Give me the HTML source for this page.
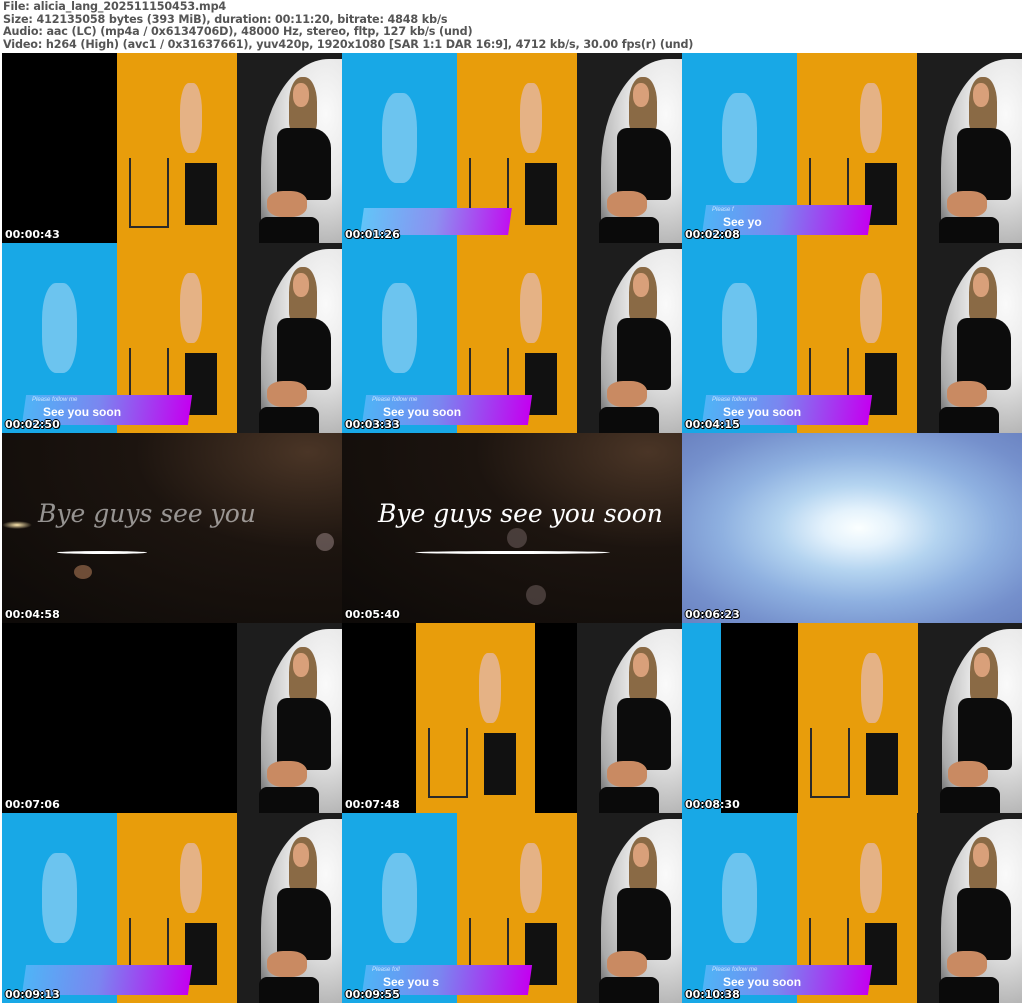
<!DOCTYPE html>
<html><head><meta charset="utf-8"><style>
*{margin:0;padding:0;box-sizing:border-box}
body{width:1024px;height:1003px;background:#fff;position:relative;overflow:hidden;font-family:"DejaVu Sans","Liberation Sans",sans-serif}
.hd{position:absolute;left:3px;top:1px;font-size:11.2px;line-height:12.6px;color:#555;font-weight:bold;white-space:pre;letter-spacing:-0.15px}
.t{position:absolute;width:340px;height:190px;overflow:hidden;background:#000}
.p{position:absolute;top:0;height:190px;overflow:hidden}
.blue{background:#18a8e6}
.or{background:#e89d0b}
.dk{background:#1d1d1d}
.blk{background:#000}
.oval{position:absolute;left:24px;top:6px;width:81px;height:184px;border-radius:68px 0 0 0 / 110px 0 0 0;background:radial-gradient(ellipse at 80% 30%,#fafafa 0,#e6e6e6 40%,#aaa 80%,#555 100%)}
.jk{position:absolute;left:40px;top:75px;width:54px;height:72px;background:#0c0c0c;border-radius:10px 20px 6px 6px}
.hair{position:absolute;left:52px;top:24px;width:28px;height:56px;background:#8a6a45;border-radius:45% 45% 20% 20%}
.face{position:absolute;left:56px;top:30px;width:16px;height:24px;background:#d9a07a;border-radius:45%}
.skin{position:absolute;left:30px;top:138px;width:40px;height:26px;background:#c98a62;border-radius:40%}
.boot{position:absolute;left:22px;top:164px;width:60px;height:26px;background:#0a0a0a;border-radius:8px 8px 0 0}
.of{position:absolute;background:#111}
.os{position:absolute;background:#e5b285;border-radius:40%}
.bl{position:absolute;background:#6cc4ef;border-radius:40%}
.ch{position:absolute;border:2px solid #2a2a2a}
.ban{position:absolute;left:22px;top:152px;width:166px;height:30px;transform:skewX(-8deg);background:linear-gradient(90deg,#4fb4f6 0,#7a86f0 45%,#c400f0 100%)}
.pf{position:absolute;left:30px;top:154px;font-family:"Liberation Sans",sans-serif;font-style:italic;font-size:6px;color:#cfe6ff}
.sy{position:absolute;left:41px;top:162px;font-family:"Liberation Sans",sans-serif;font-weight:bold;font-size:12px;color:#fff}
.ts{position:absolute;left:3px;top:175px;font-size:11px;line-height:13px;font-weight:bold;color:#fff;text-shadow:1px 1px 0 #000,-1px 0 0 #000,0 -1px 0 #000,1px 0 0 #000,0 1px 0 #000}
.bye{position:absolute;background:radial-gradient(ellipse at 90% 10%,#4a3526 0,#1c140f 40%,#0d0a08 100%)}
.script{position:absolute;font-family:"DejaVu Serif","Liberation Serif",serif;font-style:italic;font-size:25px;color:#fff;white-space:nowrap}
.swoosh{position:absolute;height:3px;background:#fff;border-radius:50%}
.glow{background:radial-gradient(ellipse at 52% 50%,#fbffff 0,#e4f2fc 14%,#b4d4f0 32%,#8eb0e0 55%,#7590cc 80%,#6a82c0 100%)}
</style></head><body>
<div class="hd">File: alicia_lang_202511150453.mp4
Size: 412135058 bytes (393 MiB), duration: 00:11:20, bitrate: 4848 kb/s
Audio: aac (LC) (mp4a / 0x6134706D), 48000 Hz, stereo, fltp, 127 kb/s (und)
Video: h264 (High) (avc1 / 0x31637661), yuv420p, 1920x1080 [SAR 1:1 DAR 16:9], 4712 kb/s, 30.00 fps(r) (und)</div>

<!-- Row 1 -->
<div class="t" style="left:2px;top:53px">
 <div class="p blk" style="left:0;width:115px"></div>
 <div class="p or" style="left:115px;width:120px"><div class="os" style="left:63px;top:30px;width:22px;height:70px"></div><div class="of" style="left:68px;top:110px;width:32px;height:62px"></div><div class="ch" style="left:12px;top:105px;width:40px;height:70px;border-width:0 2px 2px 2px"></div></div>
 <div class="p dk" style="left:235px;width:105px"><div class="oval"></div><div class="hair"></div><div class="face"></div><div class="jk"></div><div class="skin"></div><div class="boot"></div></div>
 <div class="ts">00:00:43</div>
</div>
<div class="t" style="left:342px;top:53px">
 <div class="p blue" style="left:0;width:115px"><div class="bl" style="left:40px;top:40px;width:35px;height:90px"></div></div>
 <div class="p or" style="left:115px;width:120px"><div class="os" style="left:63px;top:30px;width:22px;height:70px"></div><div class="of" style="left:68px;top:110px;width:32px;height:62px"></div><div class="ch" style="left:12px;top:105px;width:40px;height:70px;border-width:0 2px 2px 2px"></div></div>
 <div class="p dk" style="left:235px;width:105px"><div class="oval"></div><div class="hair"></div><div class="face"></div><div class="jk"></div><div class="skin"></div><div class="boot"></div></div>
 <div class="ban" style="left:20px;top:155px;width:148px;height:27px;background:linear-gradient(90deg,#62c4f8 0,#8c90f0 50%,#c010f0 100%)"></div>
 <div class="ts">00:01:26</div>
</div>
<div class="t" style="left:682px;top:53px">
 <div class="p blue" style="left:0;width:115px"><div class="bl" style="left:40px;top:40px;width:35px;height:90px"></div></div>
 <div class="p or" style="left:115px;width:120px"><div class="os" style="left:63px;top:30px;width:22px;height:70px"></div><div class="of" style="left:68px;top:110px;width:32px;height:62px"></div><div class="ch" style="left:12px;top:105px;width:40px;height:70px;border-width:0 2px 2px 2px"></div></div>
 <div class="p dk" style="left:235px;width:105px"><div class="oval"></div><div class="hair"></div><div class="face"></div><div class="jk"></div><div class="skin"></div><div class="boot"></div></div>
 <div class="ban"></div><div class="pf">Please f</div><div class="sy">See yo</div>
 <div class="ts">00:02:08</div>
</div>

<!-- Row 2 -->
<div class="t" style="left:2px;top:243px">
 <div class="p blue" style="left:0;width:115px"><div class="bl" style="left:40px;top:40px;width:35px;height:90px"></div></div>
 <div class="p or" style="left:115px;width:120px"><div class="os" style="left:63px;top:30px;width:22px;height:70px"></div><div class="of" style="left:68px;top:110px;width:32px;height:62px"></div><div class="ch" style="left:12px;top:105px;width:40px;height:70px;border-width:0 2px 2px 2px"></div></div>
 <div class="p dk" style="left:235px;width:105px"><div class="oval"></div><div class="hair"></div><div class="face"></div><div class="jk"></div><div class="skin"></div><div class="boot"></div></div>
 <div class="ban"></div><div class="pf">Please follow me</div><div class="sy">See you soon</div>
 <div class="ts">00:02:50</div>
</div>
<div class="t" style="left:342px;top:243px">
 <div class="p blue" style="left:0;width:115px"><div class="bl" style="left:40px;top:40px;width:35px;height:90px"></div></div>
 <div class="p or" style="left:115px;width:120px"><div class="os" style="left:63px;top:30px;width:22px;height:70px"></div><div class="of" style="left:68px;top:110px;width:32px;height:62px"></div><div class="ch" style="left:12px;top:105px;width:40px;height:70px;border-width:0 2px 2px 2px"></div></div>
 <div class="p dk" style="left:235px;width:105px"><div class="oval"></div><div class="hair"></div><div class="face"></div><div class="jk"></div><div class="skin"></div><div class="boot"></div></div>
 <div class="ban"></div><div class="pf">Please follow me</div><div class="sy">See you soon</div>
 <div class="ts">00:03:33</div>
</div>
<div class="t" style="left:682px;top:243px">
 <div class="p blue" style="left:0;width:115px"><div class="bl" style="left:40px;top:40px;width:35px;height:90px"></div></div>
 <div class="p or" style="left:115px;width:120px"><div class="os" style="left:63px;top:30px;width:22px;height:70px"></div><div class="of" style="left:68px;top:110px;width:32px;height:62px"></div><div class="ch" style="left:12px;top:105px;width:40px;height:70px;border-width:0 2px 2px 2px"></div></div>
 <div class="p dk" style="left:235px;width:105px"><div class="oval"></div><div class="hair"></div><div class="face"></div><div class="jk"></div><div class="skin"></div><div class="boot"></div></div>
 <div class="ban"></div><div class="pf">Please follow me</div><div class="sy">See you soon</div>
 <div class="ts">00:04:15</div>
</div>

<!-- Row 3 -->
<div class="t bye" style="left:2px;top:433px">
 <div style="position:absolute;left:0;top:88px;width:30px;height:8px;border-radius:50%;background:radial-gradient(#ffe9b0,transparent 70%)"></div>
 <div class="script" style="left:36px;top:66px;color:rgba(255,255,255,0.55)">Bye guys see you</div>
 <div class="swoosh" style="left:55px;top:118px;width:90px"></div>
 <div style="position:absolute;left:72px;top:132px;width:18px;height:14px;border-radius:50%;background:rgba(200,140,100,0.5)"></div>
 <div style="position:absolute;left:314px;top:100px;width:18px;height:18px;border-radius:50%;background:rgba(160,140,140,0.5)"></div>
 <div class="ts">00:04:58</div>
</div>
<div class="t bye" style="left:342px;top:433px">
 <div class="script" style="left:36px;top:66px">Bye guys see you soon</div>
 <div class="swoosh" style="left:73px;top:118px;width:195px"></div>
 <div style="position:absolute;left:165px;top:95px;width:20px;height:20px;border-radius:50%;background:rgba(160,140,140,0.35)"></div>
 <div style="position:absolute;left:184px;top:152px;width:20px;height:20px;border-radius:50%;background:rgba(160,140,140,0.35)"></div>
 <div class="ts">00:05:40</div>
</div>
<div class="t glow" style="left:682px;top:433px">
 <div class="ts">00:06:23</div>
</div>

<!-- Row 4 -->
<div class="t" style="left:2px;top:623px">
 <div class="p blk" style="left:0;width:235px"></div>
 <div class="p dk" style="left:235px;width:105px"><div class="oval"></div><div class="hair"></div><div class="face"></div><div class="jk"></div><div class="skin"></div><div class="boot"></div></div>
 <div class="ts">00:07:06</div>
</div>
<div class="t" style="left:342px;top:623px">
 <div class="p blk" style="left:0;width:74px"></div>
 <div class="p or" style="left:74px;width:119px"><div class="os" style="left:63px;top:30px;width:22px;height:70px"></div><div class="of" style="left:68px;top:110px;width:32px;height:62px"></div><div class="ch" style="left:12px;top:105px;width:40px;height:70px;border-width:0 2px 2px 2px"></div></div>
 <div class="p blk" style="left:193px;width:42px"></div>
 <div class="p dk" style="left:235px;width:105px"><div class="oval"></div><div class="hair"></div><div class="face"></div><div class="jk"></div><div class="skin"></div><div class="boot"></div></div>
 <div class="ts">00:07:48</div>
</div>
<div class="t" style="left:682px;top:623px">
 <div class="p blue" style="left:0;width:39px"></div>
 <div class="p blk" style="left:39px;width:77px"></div>
 <div class="p or" style="left:116px;width:120px"><div class="os" style="left:63px;top:30px;width:22px;height:70px"></div><div class="of" style="left:68px;top:110px;width:32px;height:62px"></div><div class="ch" style="left:12px;top:105px;width:40px;height:70px;border-width:0 2px 2px 2px"></div></div>
 <div class="p dk" style="left:236px;width:104px"><div class="oval"></div><div class="hair"></div><div class="face"></div><div class="jk"></div><div class="skin"></div><div class="boot"></div></div>
 <div class="ts">00:08:30</div>
</div>

<!-- Row 5 -->
<div class="t" style="left:2px;top:813px">
 <div class="p blue" style="left:0;width:115px"><div class="bl" style="left:40px;top:40px;width:35px;height:90px"></div></div>
 <div class="p or" style="left:115px;width:120px"><div class="os" style="left:63px;top:30px;width:22px;height:70px"></div><div class="of" style="left:68px;top:110px;width:32px;height:62px"></div><div class="ch" style="left:12px;top:105px;width:40px;height:70px;border-width:0 2px 2px 2px"></div></div>
 <div class="p dk" style="left:235px;width:105px"><div class="oval"></div><div class="hair"></div><div class="face"></div><div class="jk"></div><div class="skin"></div><div class="boot"></div></div>
 <div class="ban"></div>
 <div class="ts">00:09:13</div>
</div>
<div class="t" style="left:342px;top:813px">
 <div class="p blue" style="left:0;width:115px"><div class="bl" style="left:40px;top:40px;width:35px;height:90px"></div></div>
 <div class="p or" style="left:115px;width:120px"><div class="os" style="left:63px;top:30px;width:22px;height:70px"></div><div class="of" style="left:68px;top:110px;width:32px;height:62px"></div><div class="ch" style="left:12px;top:105px;width:40px;height:70px;border-width:0 2px 2px 2px"></div></div>
 <div class="p dk" style="left:235px;width:105px"><div class="oval"></div><div class="hair"></div><div class="face"></div><div class="jk"></div><div class="skin"></div><div class="boot"></div></div>
 <div class="ban"></div><div class="pf">Please foll</div><div class="sy">See you s</div>
 <div class="ts">00:09:55</div>
</div>
<div class="t" style="left:682px;top:813px">
 <div class="p blue" style="left:0;width:115px"><div class="bl" style="left:40px;top:40px;width:35px;height:90px"></div></div>
 <div class="p or" style="left:115px;width:120px"><div class="os" style="left:63px;top:30px;width:22px;height:70px"></div><div class="of" style="left:68px;top:110px;width:32px;height:62px"></div><div class="ch" style="left:12px;top:105px;width:40px;height:70px;border-width:0 2px 2px 2px"></div></div>
 <div class="p dk" style="left:235px;width:105px"><div class="oval"></div><div class="hair"></div><div class="face"></div><div class="jk"></div><div class="skin"></div><div class="boot"></div></div>
 <div class="ban"></div><div class="pf">Please follow me</div><div class="sy">See you soon</div>
 <div class="ts">00:10:38</div>
</div>
</body></html>
